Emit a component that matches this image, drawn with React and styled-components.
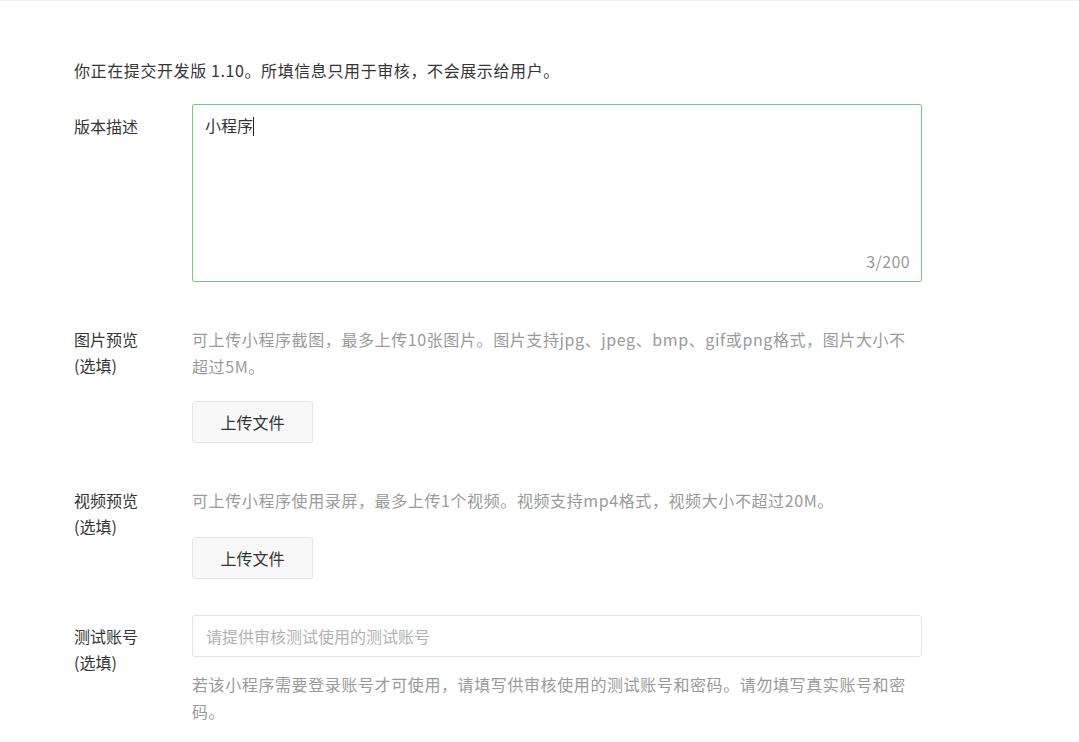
import styled, { createGlobalStyle } from 'styled-components';

const GlobalStyle = createGlobalStyle`
  html, body {
    margin: 0;
    padding: 0;
    background: #fff;
  }
  body {
    font-family: "Noto Sans CJK SC", "Noto Sans", sans-serif;
    color: #353535;
  }
`;

const Page = styled.div`
  width: 1079px;
  min-height: 742px;
  box-sizing: border-box;
  border-top: 1px solid #eeeeee;
  padding: 56px 0 0 74px;
`;

const Intro = styled.p`
  margin: 0 0 21px;
  font-size: 16px;
  line-height: 26px;
  letter-spacing: 0.6px;
  color: #353535;
`;

const FormRow = styled.div`
  display: flex;
  align-items: flex-start;
  margin-bottom: 36px;
`;

const Label = styled.div`
  width: 118px;
  flex-shrink: 0;
  padding-top: ${(p) => p.$top || 8}px;
  font-size: 16px;
  line-height: 26px;
  color: #353535;
`;

const Content = styled.div`
  width: 730px;
  display: flex;
  flex-direction: column;
  align-items: flex-start;
`;

const TextArea = styled.div`
  position: relative;
  width: 100%;
  height: 178px;
  box-sizing: border-box;
  border: 1px solid #73cb7b;
  border-radius: 2px;
  padding: 7px 12px;
  font-size: 16px;
  line-height: 26px;
  color: #353535;
`;

const Caret = styled.span`
  display: inline-block;
  width: 1px;
  height: 19px;
  background: #222;
  vertical-align: -4px;
`;

const Counter = styled.span`
  position: absolute;
  right: 11px;
  bottom: 7px;
  font-size: 16px;
  line-height: 26px;
  letter-spacing: 0.4px;
  color: #9a9a9a;
`;

const Desc = styled.p`
  margin: 0;
  padding-top: ${(p) => p.$top ?? 8}px;
  font-size: 16px;
  line-height: 27px;
  letter-spacing: 0.6px;
  color: #9a9a9a;
`;

const UploadButton = styled.button`
  margin-top: ${(p) => p.$top}px;
  width: 121px;
  height: 42px;
  box-sizing: border-box;
  border: 1px solid #e5e5e5;
  border-radius: 3px;
  background: #f8f8f8;
  font-family: inherit;
  font-size: 16px;
  color: #353535;
  cursor: pointer;
`;

const Input = styled.input`
  width: 100%;
  height: 42px;
  box-sizing: border-box;
  border: 1px solid #e4e4e4;
  border-radius: 3px;
  padding: 0 13px;
  font-family: inherit;
  font-size: 16px;
  color: #353535;
  outline: none;
  &::placeholder {
    color: #b2b2b2;
  }
`;

export default function App() {
  return (
    <>
      <GlobalStyle />
      <Page>
        <Intro>你正在提交开发版 1.10。所填信息只用于审核，不会展示给用户。</Intro>

        <FormRow>
          <Label $top={9}>版本描述</Label>
          <Content>
            <TextArea>
              小程序<Caret />
              <Counter>3/200</Counter>
            </TextArea>
          </Content>
        </FormRow>

        <FormRow>
          <Label>
            图片预览
            <br />
            (选填)
          </Label>
          <Content>
            <Desc>
              可上传小程序截图，最多上传10张图片。图片支持jpg、jpeg、bmp、gif或png格式，图片大小不超过5M。
            </Desc>
            <UploadButton $top={21}>上传文件</UploadButton>
          </Content>
        </FormRow>

        <FormRow>
          <Label>
            视频预览
            <br />
            (选填)
          </Label>
          <Content>
            <Desc>可上传小程序使用录屏，最多上传1个视频。视频支持mp4格式，视频大小不超过20M。</Desc>
            <UploadButton $top={23}>上传文件</UploadButton>
          </Content>
        </FormRow>

        <FormRow>
          <Label>
            测试账号
            <br />
            (选填)
          </Label>
          <Content>
            <Input placeholder="请提供审核测试使用的测试账号" />
            <Desc $top={14}>
              若该小程序需要登录账号才可使用，请填写供审核使用的测试账号和密码。请勿填写真实账号和密码。
            </Desc>
          </Content>
        </FormRow>
      </Page>
    </>
  );
}
